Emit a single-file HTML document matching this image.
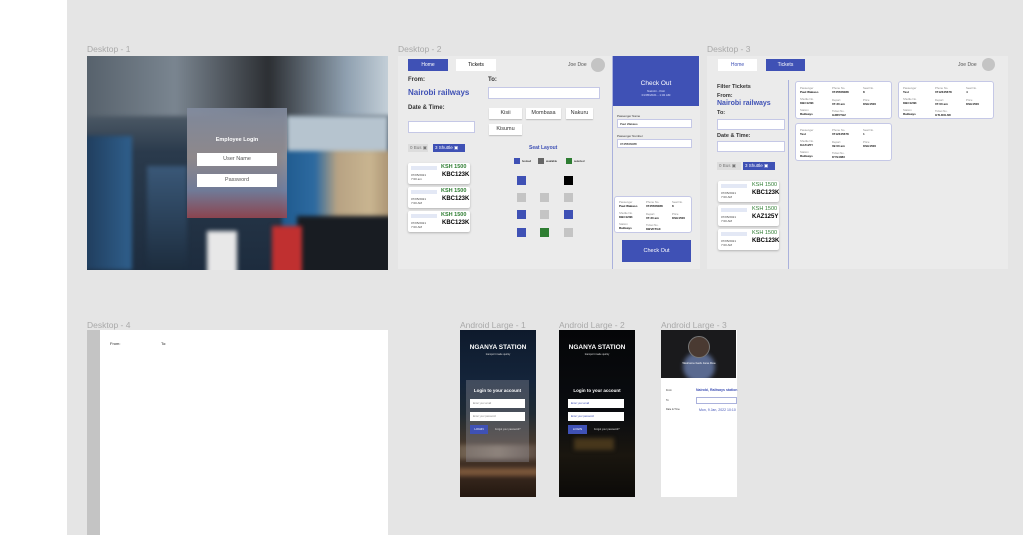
<!DOCTYPE html>
<html><head><meta charset="utf-8"><style>
*{margin:0;padding:0;box-sizing:border-box}
body{width:1023px;height:535px;overflow:hidden;background:#e5e5e5;font-family:"Liberation Sans",sans-serif;position:relative}
.a{position:absolute}
.lbl{position:absolute;font-size:8.5px;color:#a9a9a9}
.blue{background:#3f51b5}
.t{position:absolute;white-space:nowrap}
.inp{position:absolute;background:#fff;border:1px solid #c5c8e6}
.btn{position:absolute;background:#fff;box-shadow:0 1px 1px rgba(0,0,0,.2);font-size:5.5px;text-align:center;color:#333}
.card{position:absolute;background:#fff;border-radius:2px;box-shadow:0 1px 2px rgba(0,0,0,.25)}
.seat{position:absolute;width:9px;height:9px}
.tc{position:absolute;background:#fff;border:1px solid #c5c8e6;border-radius:3px}
.sm{font-size:2.8px;color:#888;position:absolute;white-space:nowrap}
.sb{font-size:3px;color:#111;font-weight:bold;position:absolute;white-space:nowrap}
.bl{filter:blur(2px)}
</style></head><body>
<div class="a" style="left:0;top:0;width:67px;height:535px;background:#fff"></div>

<!-- Desktop 1 -->
<div class="lbl" style="left:87px;top:44px">Desktop - 1</div>
<div class="a" style="left:87px;top:56px;width:301px;height:214px;overflow:hidden;background:linear-gradient(180deg,#3c4650 0%,#5b6670 20%,#2a3a4c 45%,#1d2c3e 100%)">
 <div class="a bl" style="left:-5px;top:-5px;width:311px;height:65px;background:linear-gradient(90deg,#55606a,#7a8590 30%,#2c2f33 60%,#8fa0b0 85%,#c9d4dc)"></div>
 <div class="a bl" style="left:200px;top:60px;width:101px;height:40px;background:#b6c4cf"></div>
 <div class="a bl" style="left:-5px;top:80px;width:50px;height:134px;background:linear-gradient(90deg,#1f3b5a,#2f5f8c)"></div>
 <div class="a bl" style="left:195px;top:95px;width:110px;height:119px;background:linear-gradient(90deg,#1f5a8e,#2d6aa0 30%,#b7a283 50%,#c9b590 80%,#a89070)"></div>
 <div class="a bl" style="left:210px;top:160px;width:95px;height:60px;background:#181c22"></div>
 <div class="a bl" style="left:185px;top:170px;width:30px;height:50px;background:#c03030"></div>
 <div class="a bl" style="left:60px;top:110px;width:40px;height:110px;background:linear-gradient(180deg,#3a5878,#1b2a3a)"></div>
 <div class="a bl" style="left:120px;top:175px;width:30px;height:45px;background:#e8e8e8"></div>
</div>
<div class="a" style="left:187px;top:108px;width:100px;height:110px;background:linear-gradient(180deg,rgba(130,140,160,.9),rgba(160,150,150,.85) 45%,rgba(120,130,160,.9) 75%,rgba(150,70,80,.9))"></div>
<div class="t" style="left:187px;top:137px;width:100px;text-align:center;font-size:5.5px;color:#fff;font-weight:bold">Employee Login</div>
<div class="a" style="left:197px;top:153px;width:80px;height:13px;background:#fff;font-size:5.5px;text-align:center;line-height:13px;color:#555">User Name</div>
<div class="a" style="left:197px;top:174px;width:80px;height:13px;background:#fff;font-size:5.5px;text-align:center;line-height:13px;color:#555">Password</div>

<!-- Desktop 2 -->
<div class="lbl" style="left:398px;top:44px">Desktop - 2</div>
<div class="a" style="left:398px;top:56px;width:302px;height:213px;background:#ebebeb"></div>
<div class="a blue" style="left:408px;top:59px;width:40px;height:12px;font-size:5px;color:#fff;text-align:center;line-height:12px">Home</div>
<div class="a" style="left:456px;top:59px;width:40px;height:12px;background:#fff;font-size:5px;text-align:center;line-height:12px">Tickets</div>
<div class="t" style="left:568px;top:62px;font-size:5px;color:#555">Joe Doe</div>
<div class="a" style="left:591px;top:58px;width:14px;height:14px;border-radius:50%;background:#c4c4c4"></div>
<div class="t" style="left:408px;top:77px;font-size:6px;font-weight:bold;color:#333">From:</div>
<div class="t" style="left:408px;top:88px;font-size:8px;font-weight:bold;color:#3f51b5">Nairobi railways</div>
<div class="t" style="left:408px;top:105px;font-size:6px;font-weight:bold;color:#333">Date &amp; Time:</div>
<div class="inp" style="left:408px;top:121px;width:67px;height:12px"></div>
<div class="t" style="left:488px;top:77px;font-size:6px;font-weight:bold;color:#333">To:</div>
<div class="inp" style="left:488px;top:87px;width:112px;height:12px"></div>
<div class="btn" style="left:489px;top:108px;width:33px;height:11px;line-height:11px">Kisii</div>
<div class="btn" style="left:526px;top:108px;width:35px;height:11px;line-height:11px">Mombasa</div>
<div class="btn" style="left:566px;top:108px;width:27px;height:11px;line-height:11px">Nakuru</div>
<div class="btn" style="left:489px;top:124px;width:33px;height:11px;line-height:11px">Kisumu</div>
<div class="a" style="left:408px;top:144px;width:20px;height:8px;background:#ddd;font-size:4.5px;color:#777;line-height:8px;padding-left:2px">0 Bus ▣</div>
<div class="a blue" style="left:433px;top:144px;width:32px;height:8px;font-size:4.5px;color:#fff;line-height:8px;padding-left:2px">3 Shuttle ▣</div>
<div class="t" style="left:529px;top:145px;font-size:5px;font-weight:bold;color:#3f51b5">Seat Layout</div>
<div class="seat blue" style="left:514px;top:158px;width:6px;height:6px"></div><div class="t" style="left:522px;top:159px;font-size:2.8px">booked</div>
<div class="seat" style="left:538px;top:158px;width:6px;height:6px;background:#666"></div><div class="t" style="left:546px;top:159px;font-size:2.8px">available</div>
<div class="seat" style="left:566px;top:158px;width:6px;height:6px;background:#2e7d32"></div><div class="t" style="left:574px;top:159px;font-size:2.8px">selected</div>
<div class="seat blue" style="left:517px;top:176px"></div><div class="seat" style="left:564px;top:176px;background:#000"></div>
<div class="seat" style="left:517px;top:193px;background:#c4c4c4"></div><div class="seat" style="left:540px;top:193px;background:#c4c4c4"></div><div class="seat" style="left:564px;top:193px;background:#c4c4c4"></div>
<div class="seat blue" style="left:517px;top:210px"></div><div class="seat" style="left:540px;top:210px;background:#c4c4c4"></div><div class="seat blue" style="left:564px;top:210px"></div>
<div class="seat blue" style="left:517px;top:228px"></div><div class="seat" style="left:540px;top:228px;background:#2e7d32"></div><div class="seat" style="left:564px;top:228px;background:#c4c4c4"></div>

<div class="card" style="left:408px;top:163px;width:62px;height:21px"><div class="a" style="left:3px;top:3px;width:26px;height:4px;background:#e3e8f5"></div><div class="t" style="left:33px;top:1px;font-size:5.5px;font-weight:bold;color:#2e7d32">KSH 1500</div><div class="t" style="left:3px;top:10px;font-size:3px;color:#444">07/05/2021<br>7:00 am</div><div class="t" style="left:34px;top:9px;font-size:6px;font-weight:bold">KBC123K</div></div>
<div class="card" style="left:408px;top:187px;width:62px;height:21px"><div class="a" style="left:3px;top:3px;width:26px;height:4px;background:#e3e8f5"></div><div class="t" style="left:33px;top:1px;font-size:5.5px;font-weight:bold;color:#2e7d32">KSH 1500</div><div class="t" style="left:3px;top:10px;font-size:3px;color:#444">07/05/2021<br>7:00 AM</div><div class="t" style="left:34px;top:9px;font-size:6px;font-weight:bold">KBC123K</div></div>
<div class="card" style="left:408px;top:211px;width:62px;height:21px"><div class="a" style="left:3px;top:3px;width:26px;height:4px;background:#e3e8f5"></div><div class="t" style="left:33px;top:1px;font-size:5.5px;font-weight:bold;color:#2e7d32">KSH 1500</div><div class="t" style="left:3px;top:10px;font-size:3px;color:#444">07/05/2021<br>7:00 AM</div><div class="t" style="left:34px;top:9px;font-size:6px;font-weight:bold">KBC123K</div></div>

<div class="a" style="left:612px;top:56px;width:1px;height:213px;background:#aab1dc"></div>
<div class="a blue" style="left:613px;top:56px;width:86px;height:50px"></div>
<div class="t" style="left:613px;top:80px;width:86px;text-align:center;font-size:6.5px;color:#fff">Check Out</div>
<div class="t" style="left:613px;top:89px;width:86px;text-align:center;font-size:3px;color:#dfe3ff">Nairobi - Kisii<br>01/05/2021 - 1:32 AM</div>
<div class="t" style="left:617px;top:114px;font-size:3px;color:#333">Passenger Name</div>
<div class="inp" style="left:617px;top:119px;width:75px;height:9px;font-size:3px;padding:2px">Paul Wakaso</div>
<div class="t" style="left:617px;top:134px;font-size:3px;color:#333">Passenger Number</div>
<div class="inp" style="left:617px;top:139px;width:75px;height:9px;font-size:3px;padding:2px">0745566088</div>
<div class="tc" style="left:614px;top:196px;width:78px;height:37px">
 <div class="sm" style="left:4px;top:3px">Passenger</div><div class="sb" style="left:4px;top:7px">Paul Wakaso</div>
 <div class="sm" style="left:31px;top:3px">Phone No.</div><div class="sb" style="left:31px;top:7px">0745566088</div>
 <div class="sm" style="left:57px;top:3px">Seat No.</div><div class="sb" style="left:57px;top:7px">8</div>
 <div class="sm" style="left:4px;top:14px">Shuttle No.</div><div class="sb" style="left:4px;top:18px">KBC123K</div>
 <div class="sm" style="left:31px;top:15px">Depart</div><div class="sb" style="left:31px;top:19px">07:30 am</div>
 <div class="sm" style="left:57px;top:15px">Price</div><div class="sb" style="left:57px;top:19px">KSH1500</div>
 <div class="sm" style="left:4px;top:25px">Station</div><div class="sb" style="left:4px;top:29px">Railways</div>
 <div class="sm" style="left:31px;top:26px">Ticket No.</div><div class="sb" style="left:31px;top:30px">KBVKTGX</div>
</div>
<div class="a blue" style="left:622px;top:240px;width:69px;height:22px;font-size:5.5px;color:#fff;text-align:center;line-height:22px">Check Out</div>

<!-- Desktop 3 -->
<div class="lbl" style="left:707px;top:44px">Desktop - 3</div>
<div class="a" style="left:707px;top:56px;width:301px;height:213px;background:#ebebeb"></div>
<div class="a" style="left:718px;top:59px;width:39px;height:12px;background:#fff;font-size:5px;color:#3f51b5;text-align:center;line-height:12px">Home</div>
<div class="a blue" style="left:766px;top:59px;width:39px;height:12px;font-size:5px;color:#fff;text-align:center;line-height:12px">Tickets</div>
<div class="t" style="left:958px;top:62px;font-size:5px;color:#555">Joe Doe</div>
<div class="a" style="left:982px;top:58px;width:13px;height:13px;border-radius:50%;background:#c4c4c4"></div>
<div class="a" style="left:788px;top:80px;width:1px;height:189px;background:#aab1dc"></div>
<div class="t" style="left:717px;top:84px;font-size:5.5px;font-weight:bold;color:#333">Filter Tickets</div>
<div class="t" style="left:717px;top:93px;font-size:5.5px;font-weight:bold;color:#333">From:</div>
<div class="t" style="left:717px;top:100px;font-size:7px;font-weight:bold;color:#3f51b5">Nairobi railways</div>
<div class="t" style="left:717px;top:110px;font-size:5.5px;font-weight:bold;color:#333">To:</div>
<div class="inp" style="left:717px;top:119px;width:68px;height:11px"></div>
<div class="t" style="left:717px;top:133px;font-size:5.5px;font-weight:bold;color:#333">Date &amp; Time:</div>
<div class="inp" style="left:717px;top:141px;width:68px;height:11px"></div>
<div class="a" style="left:717px;top:162px;width:24px;height:8px;background:#ddd;font-size:4.5px;color:#777;line-height:8px;padding-left:2px">0 Bus ▣</div>
<div class="a blue" style="left:743px;top:162px;width:32px;height:8px;font-size:4.5px;color:#fff;line-height:8px;padding-left:2px">3 Shuttle ▣</div>
<div class="card" style="left:718px;top:181px;width:61px;height:21px"><div class="a" style="left:3px;top:3px;width:26px;height:4px;background:#e3e8f5"></div><div class="t" style="left:34px;top:1px;font-size:5.5px;color:#2e7d32">KSH 1500</div><div class="t" style="left:3px;top:10px;font-size:3px;color:#444">07/05/2021<br>7:00 AM</div><div class="t" style="left:34px;top:9px;font-size:6px;font-weight:bold">KBC123K</div></div>
<div class="card" style="left:718px;top:205px;width:61px;height:21px"><div class="a" style="left:3px;top:3px;width:26px;height:4px;background:#e3e8f5"></div><div class="t" style="left:34px;top:1px;font-size:5.5px;color:#2e7d32">KSH 1500</div><div class="t" style="left:3px;top:10px;font-size:3px;color:#444">07/05/2021<br>7:00 AM</div><div class="t" style="left:34px;top:9px;font-size:6px;font-weight:bold">KAZ125Y</div></div>
<div class="card" style="left:718px;top:229px;width:61px;height:21px"><div class="a" style="left:3px;top:3px;width:26px;height:4px;background:#e3e8f5"></div><div class="t" style="left:34px;top:1px;font-size:5.5px;color:#2e7d32">KSH 1500</div><div class="t" style="left:3px;top:10px;font-size:3px;color:#444">07/05/2021<br>7:00 AM</div><div class="t" style="left:34px;top:9px;font-size:6px;font-weight:bold">KBC123K</div></div>

<div class="tc" style="left:795px;top:81px;width:97px;height:38px">
 <div class="sm" style="left:4px;top:4px">Passenger</div><div class="sb" style="left:4px;top:8px">Paul Wakaso</div>
 <div class="sm" style="left:36px;top:4px">Phone No.</div><div class="sb" style="left:36px;top:8px">0745566088</div>
 <div class="sm" style="left:67px;top:4px">Seat No.</div><div class="sb" style="left:67px;top:8px">8</div>
 <div class="sm" style="left:4px;top:15px">Shuttle No.</div><div class="sb" style="left:4px;top:19px">KBC123K</div>
 <div class="sm" style="left:36px;top:16px">Depart</div><div class="sb" style="left:36px;top:20px">07:30 am</div>
 <div class="sm" style="left:67px;top:16px">Price</div><div class="sb" style="left:67px;top:20px">KSH1500</div>
 <div class="sm" style="left:4px;top:26px">Station</div><div class="sb" style="left:4px;top:30px">Railways</div>
 <div class="sm" style="left:36px;top:27px">Ticket No.</div><div class="sb" style="left:36px;top:31px">G3RVTH2</div>
</div>
<div class="tc" style="left:898px;top:81px;width:96px;height:38px">
 <div class="sm" style="left:4px;top:4px">Passenger</div><div class="sb" style="left:4px;top:8px">Test</div>
 <div class="sm" style="left:36px;top:4px">Phone No.</div><div class="sb" style="left:36px;top:8px">0712345678</div>
 <div class="sm" style="left:67px;top:4px">Seat No.</div><div class="sb" style="left:67px;top:8px">4</div>
 <div class="sm" style="left:4px;top:15px">Shuttle No.</div><div class="sb" style="left:4px;top:19px">KBC123K</div>
 <div class="sm" style="left:36px;top:16px">Depart</div><div class="sb" style="left:36px;top:20px">07:00 am</div>
 <div class="sm" style="left:67px;top:16px">Price</div><div class="sb" style="left:67px;top:20px">KSH1500</div>
 <div class="sm" style="left:4px;top:26px">Station</div><div class="sb" style="left:4px;top:30px">Railways</div>
 <div class="sm" style="left:36px;top:27px">Ticket No.</div><div class="sb" style="left:36px;top:31px">GTLDXL6D</div>
</div>
<div class="tc" style="left:795px;top:123px;width:97px;height:38px">
 <div class="sm" style="left:4px;top:4px">Passenger</div><div class="sb" style="left:4px;top:8px">Test</div>
 <div class="sm" style="left:36px;top:4px">Phone No.</div><div class="sb" style="left:36px;top:8px">0712345678</div>
 <div class="sm" style="left:67px;top:4px">Seat No.</div><div class="sb" style="left:67px;top:8px">1</div>
 <div class="sm" style="left:4px;top:15px">Shuttle No.</div><div class="sb" style="left:4px;top:19px">KAZ125Y</div>
 <div class="sm" style="left:36px;top:16px">Depart</div><div class="sb" style="left:36px;top:20px">09:00 am</div>
 <div class="sm" style="left:67px;top:16px">Price</div><div class="sb" style="left:67px;top:20px">KSH1500</div>
 <div class="sm" style="left:4px;top:26px">Station</div><div class="sb" style="left:4px;top:30px">Railways</div>
 <div class="sm" style="left:36px;top:27px">Ticket No.</div><div class="sb" style="left:36px;top:31px">KYS4083</div>
</div>

<!-- Desktop 4 -->
<div class="lbl" style="left:87px;top:320px">Desktop - 4</div>
<div class="a" style="left:87px;top:330px;width:301px;height:205px;background:#fff"></div>
<div class="a" style="left:87px;top:330px;width:13px;height:205px;background:#c4c4c4"></div>
<div class="t" style="left:110px;top:341px;font-size:4px;color:#222">From:</div>
<div class="t" style="left:161px;top:341px;font-size:4px;color:#222">To:</div>

<!-- Android 1 -->
<div class="lbl" style="left:460px;top:320px">Android Large - 1</div>
<div class="a" style="left:460px;top:330px;width:76px;height:167px;overflow:hidden;background:linear-gradient(180deg,#0e1a2c 0%,#14243a 30%,#1f2a33 50%,#4a3a2c 70%,#3a2a20 85%,#241810 100%)">
 <div class="a bl" style="left:-3px;top:115px;width:82px;height:14px;background:linear-gradient(90deg,#6a5a4a,#8a7a6a,#5a4a40)"></div>
 <div class="a bl" style="left:-3px;top:138px;width:82px;height:8px;background:rgba(200,140,90,.45)"></div>
</div>
<div class="t" style="left:460px;top:344px;width:76px;text-align:center;font-size:6.5px;font-weight:bold;color:#fff">NGANYA STATION</div>
<div class="t" style="left:460px;top:353px;width:76px;text-align:center;font-size:2.5px;color:#ddd">transport made quicky</div>
<div class="a" style="left:466px;top:380px;width:63px;height:82px;background:rgba(150,150,160,.35)"></div>
<div class="t" style="left:466px;top:388px;width:63px;text-align:center;font-size:4.5px;color:#fff;font-weight:bold">Login to your account</div>
<div class="a" style="left:470px;top:399px;width:55px;height:9px;background:#fff;font-size:2.5px;color:#888;padding:3px">Enter your email</div>
<div class="a" style="left:470px;top:412px;width:55px;height:9px;background:#fff;font-size:2.5px;color:#888;padding:3px">Enter your password</div>
<div class="a blue" style="left:470px;top:425px;width:18px;height:9px;font-size:3px;color:#fff;text-align:center;line-height:9px">LOGIN</div>
<div class="t" style="left:495px;top:428px;font-size:2.5px;color:#ddd">Forgot your password?</div>

<!-- Android 2 -->
<div class="lbl" style="left:559px;top:320px">Android Large - 2</div>
<div class="a" style="left:559px;top:330px;width:76px;height:167px;overflow:hidden;background:linear-gradient(180deg,#050608 0%,#0a0c10 50%,#1a160f 75%,#0b0a08 100%)">
 <div class="a bl" style="left:15px;top:108px;width:40px;height:12px;background:rgba(120,90,40,.5)"></div>
</div>
<div class="t" style="left:559px;top:344px;width:76px;text-align:center;font-size:6.5px;font-weight:bold;color:#fff">NGANYA STATION</div>
<div class="t" style="left:559px;top:353px;width:76px;text-align:center;font-size:2.5px;color:#ddd">transport made quicky</div>
<div class="t" style="left:559px;top:388px;width:76px;text-align:center;font-size:4.5px;color:#fff;font-weight:bold">Login to your account</div>
<div class="a" style="left:568px;top:399px;width:56px;height:9px;background:#fff;font-size:2.5px;color:#3f51b5;padding:3px">Enter your email</div>
<div class="a" style="left:568px;top:412px;width:56px;height:9px;background:#fff;font-size:2.5px;color:#3f51b5;padding:3px">Enter your password</div>
<div class="a blue" style="left:568px;top:425px;width:19px;height:9px;font-size:3px;color:#fff;text-align:center;line-height:9px">LOGIN</div>
<div class="t" style="left:594px;top:428px;font-size:2.5px;color:#ddd">Forgot your password?</div>

<!-- Android 3 -->
<div class="lbl" style="left:661px;top:320px">Android Large - 3</div>
<div class="a" style="left:661px;top:330px;width:76px;height:167px;background:#fff"></div>
<div class="a" style="left:661px;top:330px;width:75px;height:48px;overflow:hidden;background:#1a1a1c">
 <div class="a bl" style="left:22px;top:22px;width:32px;height:30px;border-radius:50%;background:#5a6a90"></div>
 <div class="a" style="left:27px;top:6px;width:22px;height:22px;border-radius:50%;background:#4a3a32;border:1px solid #777"></div>
</div>
<div class="t" style="left:661px;top:361px;width:76px;text-align:center;font-size:3px;color:#fff">Welcome back Jane Doe</div>
<div class="t" style="left:666px;top:389px;font-size:2.5px;color:#333">From</div>
<div class="t" style="left:696px;top:388px;font-size:3.5px;color:#3f51b5;font-weight:bold">Nairobi, Railways station</div>
<div class="t" style="left:666px;top:399px;font-size:2.5px;color:#333">To</div>
<div class="a" style="left:696px;top:397px;width:41px;height:7px;border:1px solid #aab1dc"></div>
<div class="t" style="left:666px;top:408px;font-size:2.5px;color:#333">Date &amp; Time</div>
<div class="t" style="left:699px;top:408px;font-size:3.5px;color:#3f51b5">Mon, 9 Jan, 2022 10:10</div>
</body></html>
